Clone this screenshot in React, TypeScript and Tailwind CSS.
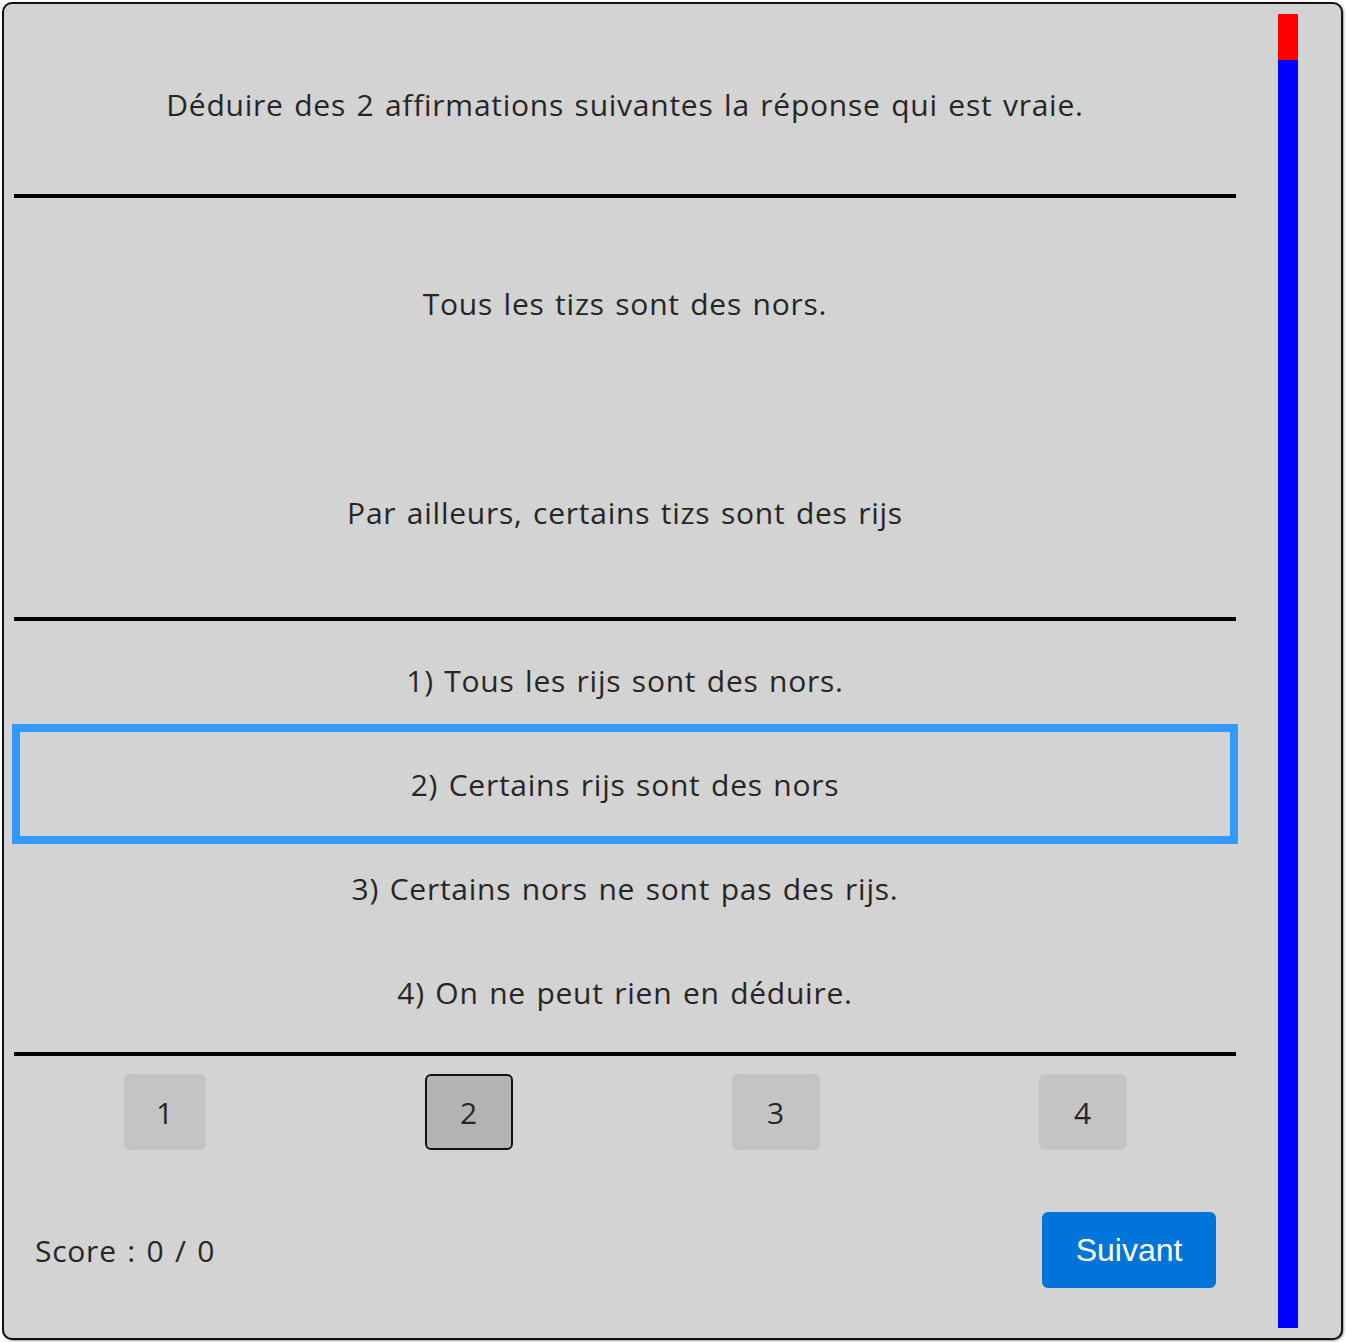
import React from "react";

const font = {
  fontFamily: '"Open Sans", "Noto Sans", sans-serif',
  letterSpacing: "0.75px",
  wordSpacing: "2px",
};

export default function App() {
  const options = [
    "1) Tous les rijs sont des nors.",
    "2) Certains rijs sont des nors",
    "3) Certains nors ne sont pas des rijs.",
    "4) On ne peut rien en déduire.",
  ];
  const selected = 1;
  return (
    <div className="w-[1346px] h-[1342px] bg-white p-[2px]" style={font}>
      <div className="h-[1338px] w-[1341px] rounded-[10px] border-2 border-[#111] bg-[#d3d3d3] flex pl-[10px] pr-[43px] py-[10px] shadow-[1px_1px_2px_rgba(0,0,0,0.4)]">
        <div className="w-[1222px] flex flex-col text-[#262626]">
          <div className="h-[180px] flex items-center justify-center text-[30px]">
            Déduire des 2 affirmations suivantes la réponse qui est vraie.
          </div>
          <div className="h-[4px] bg-black" />
          <div className="h-[210px] flex items-center justify-center text-[30px]">
            Tous les tizs sont des nors.
          </div>
          <div className="h-[209px] flex items-center justify-center text-[30px]">
            Par ailleurs, certains tizs sont des rijs
          </div>
          <div className="h-[4px] bg-black" />
          <div className="flex flex-col pt-[7px] pb-[8px]">
            {options.map((o, i) => (
              <div
                key={i}
                className={
                  "h-[104px] mx-[6px] flex items-center justify-center text-[30px] " +
                  (i === selected ? "outline-8 outline-solid outline-[#3399ff]" : "")
                }
              >
                {o}
              </div>
            ))}
          </div>
          <div className="h-[4px] bg-black" />
          <div className="mt-[18px] flex justify-around items-center">
            {["1", "2", "3", "4"].map((n, i) => (
              <button
                key={n}
                className={
                  "h-[76px] rounded-[6px] flex items-center justify-center text-[30px] text-[#262626] " +
                  (i === selected
                    ? "w-[88px] bg-[#b3b3b3] border-2 border-[#111]"
                    : i === 0
                    ? "w-[82px] bg-[#c4c4c4]"
                    : "w-[88px] bg-[#c4c4c4]")
                }
                style={{ letterSpacing: "0px" }}
              >
                {n}
              </button>
            ))}
          </div>
          <div className="mt-[62px] flex items-center justify-between pl-[21px] pr-[20px]">
            <div className="text-[30px]">Score : 0 / 0</div>
            <button
              className="w-[174px] h-[76px] rounded-[6px] bg-[#0074d9] text-white text-[32px] flex items-center justify-center"
              style={{ fontFamily: '"Liberation Sans", Arial, sans-serif', letterSpacing: "0px", wordSpacing: "0px" }}
            >
              Suivant
            </button>
          </div>
        </div>
        <div className="ml-[42px] w-[20px] flex flex-col">
          <div className="h-[46px] bg-[#ff0000]" />
          <div className="flex-1 bg-[#0000ff]" />
        </div>
      </div>
    </div>
  );
}
